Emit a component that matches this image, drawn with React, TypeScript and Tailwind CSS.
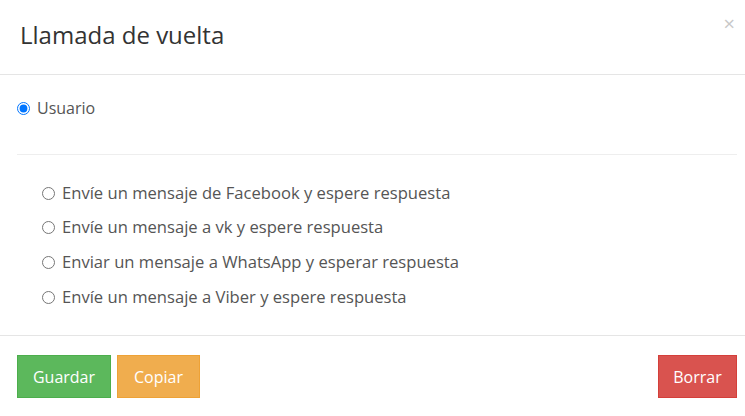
import React from 'react';

const options = [
  'Envíe un mensaje de Facebook y espere respuesta',
  'Envíe un mensaje a vk y espere respuesta',
  'Enviar un mensaje a WhatsApp y esperar respuesta',
  'Envíe un mensaje a Viber y espere respuesta',
];

export default function App() {
  return (
    <div className="w-[745px] h-[416px] bg-white text-[#555] overflow-hidden" style={{ fontFamily: '"Open Sans", Lato, sans-serif' }}>
      {/* Header */}
      <div className="h-[75px] flex items-center justify-between border-b border-[#e5e5e5] pl-[20px] pr-[10px]">
        <h4 className="text-[24px] leading-none text-[#333] font-normal -mt-[4px]">Llamada de vuelta</h4>
        <button className="self-start mt-[14px] text-[20px] leading-none text-[#c8c8c8]">×</button>
      </div>

      {/* Body */}
      <div className="pl-[17px] pr-[8px] pt-[23px] h-[261px] border-b border-[#e5e5e5]">
        <label className="flex items-center gap-[7px] h-[20px] text-[16px]">
          <input type="radio" name="tipo" defaultChecked className="m-0 w-[13px] h-[13px] accent-[#0075ff]" />
          <span>Usuario</span>
        </label>
        <div className="mt-[36px] border-t border-[#eee]" />
        <div className="pl-[25px] pt-[28px] flex flex-col gap-[14.7px]">
          {options.map((o) => (
            <label key={o} className="flex items-center gap-[7px] h-[20px] text-[16.6px]">
              <input type="radio" name="accion" className="m-0 w-[13px] h-[13px]" />
              <span>{o}</span>
            </label>
          ))}
        </div>
      </div>

      {/* Footer */}
      <div className="flex items-start justify-between pl-[17px] pr-[8px] pt-[19px]">
        <div className="flex gap-[6px]">
          <button className="h-[43px] w-[94px] bg-[#5cb85c] border border-[#4cae4c] text-white text-[16px]">Guardar</button>
          <button className="h-[43px] w-[83px] bg-[#f0ad4e] border border-[#eea236] text-white text-[16px]">Copiar</button>
        </div>
        <button className="h-[43px] w-[79px] bg-[#d9534f] border border-[#d43f3a] text-white text-[16px]">Borrar</button>
      </div>
    </div>
  );
}
